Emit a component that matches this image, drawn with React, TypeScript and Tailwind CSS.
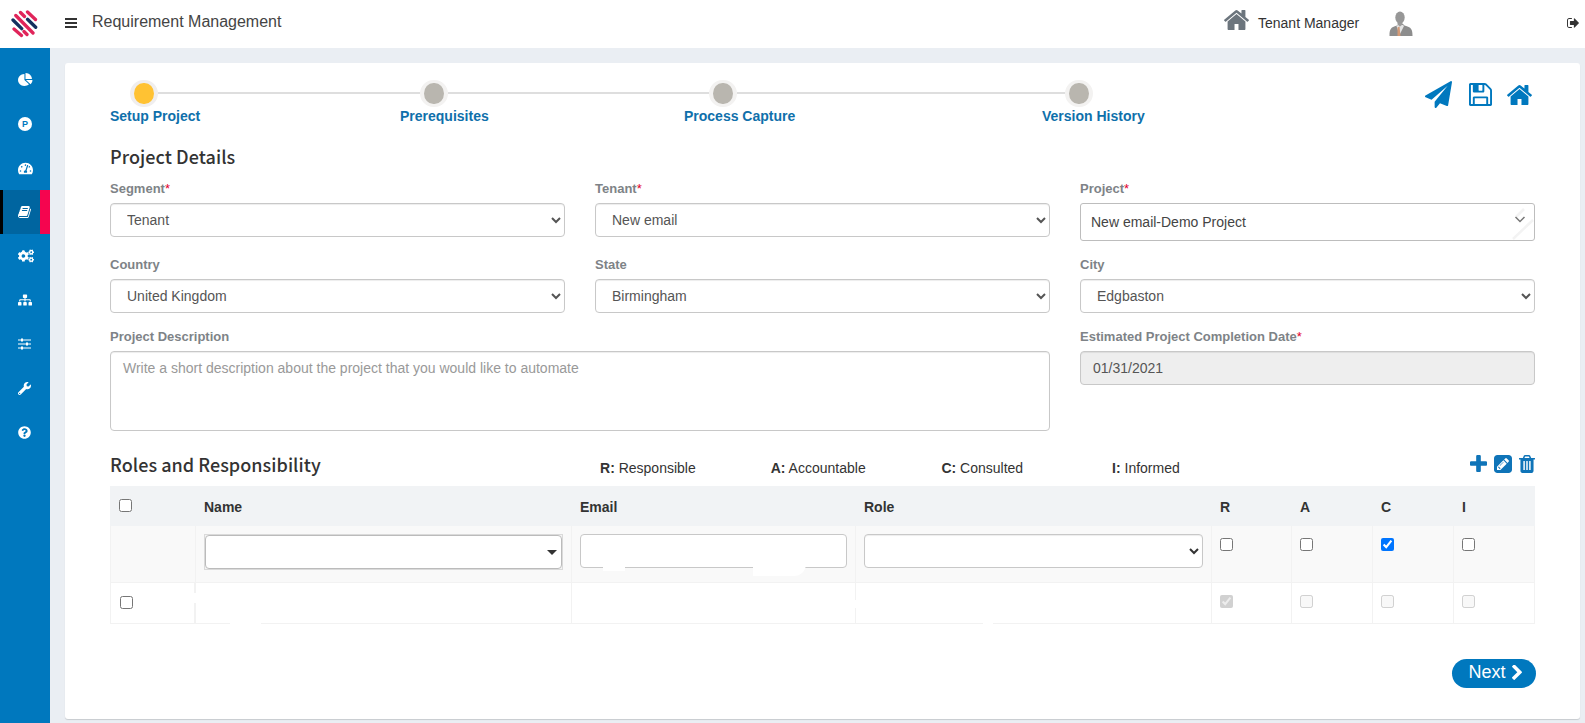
import React from 'react'
import {
  FaCogs,
  FaQuestionCircle,
  FaSitemap,
  FaTachometerAlt,
  FaWrench,
} from 'react-icons/fa'

const paths = {
  home: 'M1408 992v480q0 26-19 45t-45 19h-384v-384h-256v384h-384q-26 0-45-19t-19-45v-480q0-1 .5-3t.5-3l575-474 575 474q1 2 1 6zm223-69l-62 74q-8 9-21 11h-3q-13 0-21-7l-692-577-692 577q-12 8-24 7-13-2-21-11l-62-74q-8-10-7-23.5t11-21.5l719-599q32-26 76-26t76 26l244 204v-195q0-14 9-23t23-9h192q14 0 23 9t9 23v408l219 182q10 8 11 21.5t-7 23.5z',
  pie: 'M768 890l546 546q-106 108-247.5 168t-298.5 60q-209 0-385.5-103t-279.5-279.5-103-385.5 103-385.5 279.5-279.5 385.5-103v762zm187 6h773q0 157-60 298.5t-168 247.5zm709-128h-768v-768q209 0 385.5 103t279.5 279.5 103 385.5z',
  book: 'M1703 478q40 57 18 129l-275 906q-19 64-76.5 107.5t-122.5 43.5h-923q-77 0-148.5-53.5t-99.5-131.5q-24-67-2-127 0-4 3-27t4-37q1-8-3-21.5t-3-19.5q2-11 8-21t16.5-23.5 16.5-23.5q23-38 45-91.5t30-91.5q3-10 .5-30t-.5-28q3-11 17-28t17-23q21-36 42-92t25-90q1-9-2.5-32t.5-28q4-13 22-30.5t22-22.5q19-26 42.5-84.5t27.5-96.5q1-8-3-25.5t-2-26.5q2-8 9-18t18-23 17-21q8-12 16.5-30.5t15-35 16-36 19.5-32 26.5-23.5 36-11.5 47.5 5.5l-1 3q38-9 51-9h761q74 0 114 56t18 130l-274 906q-36 119-71.5 153.5t-128.5 34.5h-869q-27 0-38 15-11 16-1 43 24 70 144 70h923q29 0 56-15.5t35-41.5l300-987q7-22 5-57 38 15 59 43zm-1064 2q-4 13 2 22.5t20 9.5h608q13 0 25.5-9.5t16.5-22.5l21-64q4-13-2-22.5t-20-9.5h-608q-13 0-25.5 9.5t-16.5 22.5zm-83 256q-4 13 2 22.5t20 9.5h608q13 0 25.5-9.5t16.5-22.5l21-64q4-13-2-22.5t-20-9.5h-608q-13 0-25.5 9.5t-16.5 22.5z',
  plane: 'M1764 11q33 24 27 64l-256 1536q-5 29-32 45-14 8-31 8-11 0-24-5l-453-185-242 295q-18 23-49 23-13 0-22-4-19-7-30.5-23.5t-11.5-36.5v-349l864-1059-1069 925-395-162q-37-14-40-55-2-40 32-59l1664-960q15-9 32-9 20 0 36 11z',
  save: 'M512 1536h768v-384h-768v384zm896 0h128v-896q0-14-10-38.5t-20-34.5l-281-281q-10-10-34-20t-39-10v416q0 40-28 68t-68 28h-576q-40 0-68-28t-28-68v-416h-128v1280h128v-416q0-40 28-68t68-28h832q40 0 68 28t28 68v416zm-384-928v-320q0-13-9.5-22.5t-22.5-9.5h-192q-13 0-22.5 9.5t-9.5 22.5v320q0 13 9.5 22.5t22.5 9.5h192q13 0 22.5-9.5t9.5-22.5zm640 32v928q0 40-28 68t-68 28h-1344q-40 0-68-28t-28-68v-1344q0-40 28-68t68-28h928q40 0 88 20t76 48l280 280q28 28 48 76t20 88z',
  plus: 'M1600 736v192q0 40-28 68t-68 28h-416v416q0 40-28 68t-68 28h-192q-40 0-68-28t-28-68v-416h-416q-40 0-68-28t-28-68v-192q0-40 28-68t68-28h416v-416q0-40 28-68t68-28h192q40 0 68 28t28 68v416h416q40 0 68 28t28 68z',
  edit: 'M404 1108l152 152-52 52h-56v-96h-96v-56zm414-390q14 13-3 30l-291 291q-17 17-30 3-14-13 3-30l291-291q17-17 30-3zm-274 690l544-544-288-288-544 544v288h288zm608-608l92-92q28-28 28-68t-28-68l-152-152q-28-28-68-28t-68 28l-92 92zm384-384v960q0 119-84.5 203.5t-203.5 84.5h-960q-119 0-203.5-84.5t-84.5-203.5v-960q0-119 84.5-203.5t203.5-84.5h960q119 0 203.5 84.5t84.5 203.5z',
  trash: 'M704 1376v-704q0-14-9-23t-23-9h-64q-14 0-23 9t-9 23v704q0 14 9 23t23 9h64q14 0 23-9t9-23zm256 0v-704q0-14-9-23t-23-9h-64q-14 0-23 9t-9 23v704q0 14 9 23t23 9h64q14 0 23-9t9-23zm256 0v-704q0-14-9-23t-23-9h-64q-14 0-23 9t-9 23v704q0 14 9 23t23 9h64q14 0 23-9t9-23zm-544-992h448l-48-117q-7-9-17-11h-317q-10 2-17 11zm928 32v64q0 14-9 23t-23 9h-96v948q0 83-47 143.5t-113 60.5h-832q-66 0-113-58.5t-47-141.5v-952h-96q-14 0-23-9t-9-23v-64q0-14 9-23t23-9h309l70-167q15-37 54-63t79-26h320q40 0 79 26t54 63l70 167h309q14 0 23 9t9 23z',
  chevron: 'M1363 877l-742 742q-19 19-45 19t-45-19l-166-166q-19-19-19-45t19-45l531-531-531-531q-19-19-19-45t19-45l166-166q19-19 45-19t45 19l742 742q19 19 19 45t-19 45z',
  signOut: 'M704 1440q0 4 1 20t.5 26.5-3 23.5-10 19.5-20.5 6.5h-320q-119 0-203.5-84.5t-84.5-203.5v-704q0-119 84.5-203.5t203.5-84.5h320q13 0 22.5 9.5t9.5 22.5q0 4 1 20t.5 26.5-3 23.5-10 19.5-20.5 6.5h-320q-66 0-113 47t-47 113v704q0 66 47 113t113 47h312l11.5 1 11.5 3 8 5.5 7 9 2 13.5zm928-544q0 26-19 45l-544 544q-19 19-45 19t-45-19-19-45v-288h-448q-26 0-45-19t-19-45v-384q0-26 19-45t45-19h448v-288q0-26 19-45t45-19 45 19l544 544q19 19 19 45z',
}

type IconProps = { name: keyof typeof paths; box: string; className: string }

function Icon({ name, box, className }: IconProps) {
  return (
    <svg viewBox={box} preserveAspectRatio="none" fill="currentColor" className={className}>
      <path d={paths[name]} />
    </svg>
  )
}

function Logo() {
  return (
    <svg viewBox="11 10 27 28" className="ml-[11px] h-7 w-[27px]" fill="none" strokeWidth="3.3" strokeLinecap="round">
      <path d="M27.5 12l8 7.500M20.500 12.500l4 4M15.800 15.500l17.200 17.500M24 31.500l3 3M14 29l7.500 6.500" stroke="#e0245a" />
      <path d="M27.500 19.300l8.200 8M13 20l8.700 8.700" stroke="#14305f" />
    </svg>
  )
}

function Avatar() {
  return (
    <svg viewBox="0 0 24 25" className="mb-[2px] h-[25px] w-6">
      <path d="M.5 25c0-7 1-8.500 7.500-10.500l2-1.500h4l1.500 1.500c7 2 8 3.500 8 10.500z" fill="#8d8d8d" />
      <path d="M7.500 15l3 9 4.500-9-1-1h-5z" fill="#e4e4e4" />
      <path d="M8.500 16.500l2-1 1 9.500h-3z" fill="#d49a76" />
      <path d="M8.500 10.500h5v3l-2.500 2-2.500-2z" fill="#9b9b9b" />
      <ellipse cx="11" cy="6.500" rx="4.700" ry="6" fill="#979797" />
    </svg>
  )
}

function Sliders() {
  return (
    <svg viewBox="0 0 13 12" className="h-3 w-[13px]" fill="currentColor">
      <path d="M0 1.500h13v1H0zM0 5.500h13v1H0zM0 9.500h13v1H0z" />
      <path d="M3 .5h2v3H3zM8 4.500h2v3H8zM3 8.500h2v3H3z" />
    </svg>
  )
}

const menu = [
  <Icon name="pie" box="0 0 1792 1792" className="h-[14px] w-[15px]" />,
  <span className="flex h-[14px] w-[14px] items-center justify-center rounded-full bg-white text-[9px] leading-none font-bold text-[#0078be]">P</span>,
  <FaTachometerAlt className="size-[15px]" />,
  <Icon name="book" box="64 128 1664 1536" className="h-3 w-[13px]" />,
  <FaCogs className="size-4" />,
  <FaSitemap className="size-[14px]" />,
  <Sliders />,
  <FaWrench className="size-[13px]" />,
  <FaQuestionCircle className="size-[13px]" />,
]

function Sidebar() {
  return (
    <nav className="w-[50px] flex-none bg-[#0078be] pt-[10px] text-white">
      {menu.map((icon, index) => (
        <div
          key={index}
          className={
            index === 3
              ? 'flex h-11 items-center border-r-10 border-l-3 border-r-[#f5054f] border-l-black bg-[#0065a0] pl-[15px]'
              : 'flex h-11 items-center pl-[18px]'
          }
        >
          {icon}
        </div>
      ))}
    </nav>
  )
}

function Label({ text, required = false }: { text: string; required?: boolean }) {
  return (
    <label className="mb-1 block pt-px text-[13px] leading-5 font-bold text-[#7e8387]">
      {text}
      {required && <span className="font-normal text-[#e3002b]">*</span>}
    </label>
  )
}

function SelectField({ label, value, required }: { label: string; value: string; required?: boolean }) {
  return (
    <div>
      <Label text={label} required={required} />
      <select className="block h-[34px] w-full rounded-[4px] border border-[#c8c8c8] bg-white px-3 text-[14px] text-[#555] shadow-[inset_0_1px_1px_rgba(0,0,0,0.075)]">
        <option>{value}</option>
      </select>
    </div>
  )
}

function Dot({ active = false }) {
  return (
    <span
      className={
        active
          ? 'h-[27px] w-7 flex-none rounded-full border-x-4 border-y-3 border-[#f0eeee] bg-[#ffc233]'
          : 'h-[27px] w-7 flex-none rounded-full border-x-4 border-y-3 border-[#f3f2f1] bg-[#b9b6af]'
      }
    />
  )
}

function Stepper() {
  return (
    <div className="w-[1040px]">
      <div className="flex items-center pl-5">
        <Dot active />
        <span className="-mt-px h-[2px] w-[262px] bg-[#dedede]" />
        <Dot />
        <span className="-mt-px h-[2px] w-[261px] bg-[#dedede]" />
        <Dot />
        <span className="-mt-px h-[2px] w-[328px] bg-[#dedede]" />
        <Dot />
      </div>
      <div className="-mt-px flex text-[14px] leading-5 font-bold whitespace-nowrap text-[#0f70ab]">
        <span className="w-[290px]">Setup Project</span>
        <span className="w-[284px]">Prerequisites</span>
        <span className="w-[358px]">Process Capture</span>
        <span>Version History</span>
      </div>
    </div>
  )
}

const heading = "font-['Noto_Sans_CJK_JP','Noto_Sans',sans-serif] text-[18px] leading-6 font-medium text-[#333]"

function ProjectForm() {
  return (
    <div className="mt-[10px] grid grid-cols-[455px_455px_1fr] gap-x-[30px] gap-y-[13px]">
      <SelectField label="Segment" value="Tenant" required />
      <SelectField label="Tenant" value="New email" required />
      <div>
        <Label text="Project" required />
        <div className="flex h-[38px] items-center rounded-[3px] border border-[#bdbdbd] pl-[10px] text-[14px] text-[#444]">
          New email-Demo Project
          <svg viewBox="0 0 22 36" className="ml-auto h-9 w-[22px]" fill="none">
            <path d="M1 35L21 16M4 13l8-8" stroke="#f3f3f3" strokeWidth="2.500" />
            <path d="M3.500 13l4.500 4.500 4.500-4.500" stroke="#777" strokeWidth="1.500" />
          </svg>
        </div>
      </div>
      <SelectField label="Country" value="United Kingdom" />
      <SelectField label="State" value="Birmingham" />
      <SelectField label="City" value="Edgbaston" />
      <div className="col-span-2">
        <Label text="Project Description" />
        <textarea
          className="block h-20 w-full resize-none rounded-[4px] border border-[#c8c8c8] px-3 py-[6px] text-[14px] leading-5 shadow-[inset_0_1px_1px_rgba(0,0,0,0.075)] placeholder:text-[#999]"
          placeholder="Write a short description about the project that you would like to automate"
        />
      </div>
      <div>
        <Label text="Estimated Project Completion Date" required />
        <input
          className="block h-[34px] w-full rounded-[4px] border border-[#c8c8c8] bg-[#eee] px-3 text-[14px] text-[#555] shadow-[inset_0_1px_1px_rgba(0,0,0,0.075)]"
          defaultValue="01/31/2021"
          readOnly
        />
      </div>
    </div>
  )
}

const legend = [
  ['R', 'Responsible'],
  ['A', 'Accountable'],
  ['C', 'Consulted'],
  ['I', 'Informed'],
]

function Check({ checked = false, disabled = false }) {
  return <input type="checkbox" className="block size-[13px]" defaultChecked={checked} disabled={disabled} />
}

const columns = 'grid grid-cols-[85px_376px_284px_356px_80px_81px_81px_1fr]'

function RolesTable() {
  return (
    <div className="text-[14px] text-[#333]">
      <div className={`${columns} h-10 bg-[#f1f3f5] leading-5 font-bold`}>
        <div className="pt-[13px] pl-[9px]"><Check /></div>
        {['Name', 'Email', 'Role', 'R', 'A', 'C', 'I'].map((title) => (
          <div key={title} className="pt-[11px] pl-[9px]">{title}</div>
        ))}
      </div>
      <div className={`${columns} h-[56px] border-r border-[#f2f2f2] bg-[#f9f9f9] *:border-l *:border-[#f2f2f2]`}>
        <div />
        <div className="px-2 pt-2">
          <div className="h-[36px] w-[359px] border border-[#dadada] bg-[#f4f4f4]">
            <div className="flex h-[34px] items-center justify-end rounded-[4px] border border-[#bbb] bg-white pr-1">
              <svg viewBox="0 0 10 6" className="h-[5px] w-[10px]" preserveAspectRatio="none" fill="#333"><path d="M0 0h10L5 6z" /></svg>
            </div>
          </div>
        </div>
        <div className="relative px-2 pt-2">
          <input className="block h-[34px] w-full rounded-[4px] border border-[#c8c8c8] bg-white px-3" />
          <span className="absolute top-[37px] left-[31px] h-2 w-[22px] bg-white" />
          <span className="absolute top-[37px] left-[181px] h-[13px] w-[53px] rounded-br-xl bg-white" />
        </div>
        <div className="px-2 pt-2">
          <select className="block h-[34px] w-[339px] rounded-[4px] border border-[#c8c8c8] bg-white px-3 shadow-[inset_0_1px_1px_rgba(0,0,0,0.075)]" />
        </div>
        <div className="pt-3 pl-2"><Check /></div>
        <div className="pt-3 pl-2"><Check /></div>
        <div className="pt-3 pl-2"><Check checked /></div>
        <div className="pt-3 pl-2"><Check /></div>
      </div>
      <div className={`${columns} h-[42px] border-y border-r border-[#f2f2f2] *:border-l *:border-[#f2f2f2]`}>
        <div className="border-r border-r-[#f2f2f2] pt-[13px] pl-[9px]"><Check /></div>
        <div className="relative">
          <span className="absolute top-[10px] -left-[2px] h-[10px] w-[3px] bg-white" />
          <span className="absolute -bottom-px left-[34px] h-px w-[31px] bg-white" />
        </div>
        <div />
        <div className="relative">
          <span className="absolute top-[17px] -left-px h-2 w-[2px] bg-white" />
          <span className="absolute -bottom-px left-[127px] h-px w-[10px] bg-white" />
        </div>
        <div className="pt-3 pl-2"><Check checked disabled /></div>
        <div className="pt-3 pl-2"><Check disabled /></div>
        <div className="pt-3 pl-2"><Check disabled /></div>
        <div className="pt-3 pl-2"><Check disabled /></div>
      </div>
    </div>
  )
}

export default function App() {
  return (
    <div className="flex h-[723px] w-[1585px] flex-col overflow-hidden bg-[#eaeef3] font-['Liberation_Sans',Arial,sans-serif]">
      <header className="flex h-12 flex-none items-center bg-white text-[#333]">
        <Logo />
        <div className="mb-[2px] ml-[27px] flex w-3 flex-col gap-[2px]">
          <span className="h-[2px] bg-[#333]" />
          <span className="h-[2px] bg-[#333]" />
          <span className="h-[2px] bg-[#333]" />
        </div>
        <h1 className="mb-1 ml-[15px] text-[16px] leading-6 text-[#444]">Requirement Management</h1>
        <div className="ml-auto flex items-center">
          <Icon name="home" box="24 253 1616 1283" className="mb-2 h-5 w-[25px] text-[#6c757d]" />
          <span className="mb-[2px] ml-[9px] w-[131px] text-[14px] leading-5">Tenant Manager</span>
          <Avatar />
          <Icon name="signOut" box="64 256 1568 1280" className="mr-[6px] mb-[2px] ml-[154px] h-[10px] w-3" />
        </div>
      </header>

      <div className="flex min-h-0 flex-1">
        <Sidebar />
        <main className="flex-1 pt-[15px] pr-[5.500px] pl-[15px]">
          <section className="h-[656px] rounded-[3px] bg-white px-[45px] pt-[17px] shadow-[0_1px_1px_rgba(0,0,0,0.15)]">
            <div className="flex justify-between">
              <Stepper />
              <div className="flex h-7 items-center pr-[2.500px] text-[#0078be]">
                <Icon name="plane" box="0 0 1792 1792" className="h-[27px] w-[27px]" />
                <Icon name="save" box="128 128 1536 1536" className="ml-[17px] size-[23px]" />
                <Icon name="home" box="24 253 1616 1283" className="mt-[2px] ml-[15px] h-5 w-[25px]" />
              </div>
            </div>

            <h2 className={`${heading} mt-[18px] tracking-[0.06px]`}>Project Details</h2>
            <ProjectForm />

            <div className="mt-[21px] flex h-[34px]">
              <h2 className={`${heading} w-[490px] tracking-[0.04px]`}>Roles and Responsibility</h2>
              <div className="flex pt-[6px] text-[14px] leading-5 text-[#333]">
                {legend.map(([key, name]) => (
                  <span key={key} className="w-[170.700px]">
                    <b>{key}:</b> {name}
                  </span>
                ))}
              </div>
              <div className="ml-auto flex items-start pt-[3px] text-[#0f74b8]">
                <Icon name="plus" box="192 128 1408 1408" className="size-[17px]" />
                <Icon name="edit" box="0 128 1536 1536" className="ml-[7px] size-[18px]" />
                <Icon name="trash" box="192 128 1408 1536" className="ml-[7px] h-[18px] w-4" />
              </div>
            </div>
            <RolesTable />

            <div className="mt-[35px] -mr-px flex justify-end">
              <button className="flex h-[29px] w-[84px] rounded-full bg-[#0078be] pl-[17px] text-[18px] leading-[26px] text-white">
                Next
                <Icon name="chevron" box="346 90 1036 1548" className="mt-[6px] ml-[6px] h-[15px] w-[10px]" />
              </button>
            </div>
          </section>
        </main>
      </div>
    </div>
  )
}
